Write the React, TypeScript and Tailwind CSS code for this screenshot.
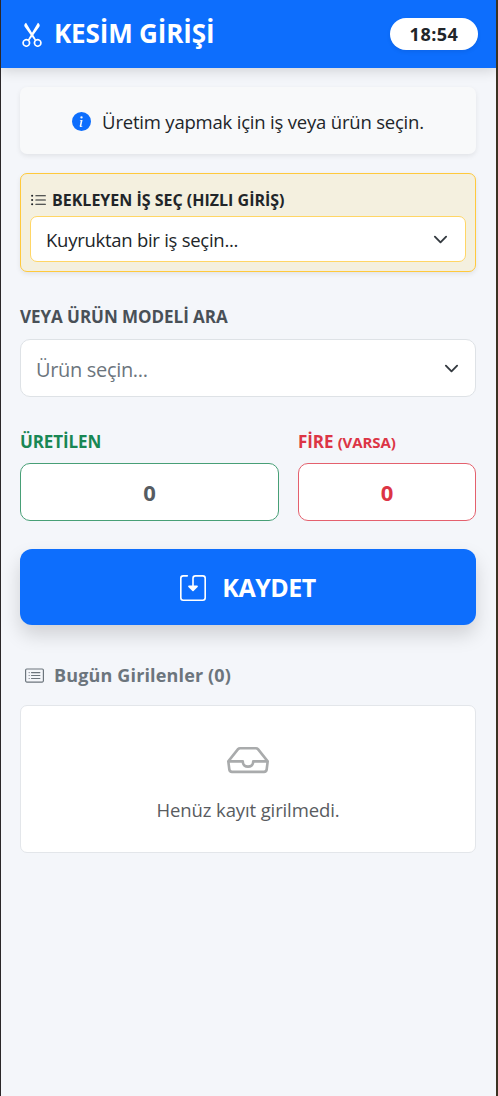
import React from "react";
import {
  BsCardList,
  BsInbox,
  BsInfoCircleFill,
  BsListUl,
  BsSave2,
  BsScissors,
} from "react-icons/bs";

interface QuantityFieldProps {
  label: React.ReactNode;
  value: number;
  labelClass: string;
  boxClass: string;
}

const Chevron = () => (
  <svg
    viewBox="0 0 16 16"
    className="h-[15px] w-[15px] shrink-0 fill-none stroke-[#343a40] stroke-2"
    strokeLinecap="round"
    strokeLinejoin="round"
  >
    <path d="m2 5 6 6 6-6" />
  </svg>
);

const QuantityField = ({ label, value, labelClass, boxClass }: QuantityFieldProps) => (
  <div>
    <div className={`h-6 text-[17px] leading-6 font-bold tracking-[-0.1px] whitespace-nowrap ${labelClass}`}>
      {label}
    </div>
    <div
      className={`mt-[9px] flex h-[58px] items-center justify-center rounded-[10px] border bg-white text-[22px] font-bold ${boxClass}`}
    >
      {value}
    </div>
  </div>
);

const App = () => {
  const entries: string[] = [];

  return (
    <div className="h-[1096px] w-[498px] overflow-hidden border-r-2 border-l border-r-[#3b3222] border-l-[#2b2729] bg-[#f4f6fa] font-['Open_Sans','Noto_Sans',sans-serif] text-[#212529]">
      <header className="flex h-[68px] items-center justify-between bg-[#0d6efd] pr-[18px] pl-[18px] text-white shadow-[0_3px_12px_rgba(0,0,0,0.14)]">
        <h1 className="flex items-center pb-px text-[26px] font-bold whitespace-nowrap">
          <BsScissors className="mr-[9px] h-[26px] w-[26px]" />
          <span className="tracking-[-0.15px]">KESİM GİRİŞİ</span>
        </h1>
        <div className="flex h-8 w-[88px] items-center justify-center rounded-full bg-white text-lg font-bold tracking-[0.5px] text-[#212529] shadow-[0_2px_4px_rgba(0,0,0,0.075)]">
          18:54
        </div>
      </header>

      <main className="mr-[19px] ml-[19px] flex w-[456px] flex-col pt-[19px]">
        <div className="flex h-[67px] items-center justify-center rounded-[7px] bg-[#f8f9fa] pt-0.5 text-[18.5px] whitespace-nowrap shadow-[0_2px_5px_rgba(0,0,0,0.08)]">
          <BsInfoCircleFill className="mr-[11px] h-[19px] w-[19px] text-[#0d6efd]" />
          <span className="tracking-[-0.2px]">Üretim yapmak için iş veya ürün seçin.</span>
        </div>

        <section className="mt-[19px] h-[99px] rounded-[7px] border border-[#ffc93c] bg-[#f4f0df] px-[9px] pt-[14px] shadow-[0_2px_5px_rgba(0,0,0,0.08)]">
          <div className="flex h-6 items-center text-base font-bold whitespace-nowrap">
            <BsListUl className="mr-[5px] h-[17px] w-[17px]" />
            <span>BEKLEYEN İŞ SEÇ (HIZLI GİRİŞ)</span>
          </div>
          <div className="mt-1 flex h-[46px] items-center justify-between rounded-[7px] border border-[#ffd666] bg-white pr-[17px] pl-[15px] text-[18.5px] whitespace-nowrap">
            <span className="pt-0.5 tracking-[-0.27px]">Kuyruktan bir iş seçin...</span>
            <Chevron />
          </div>
        </section>

        <div className="mt-[33px] h-6 text-[17px] leading-6 font-bold text-[#495057]">
          <span className="tracking-[-0.04px]">VEYA ÜRÜN MODELİ ARA</span>
        </div>
        <div className="mt-[10px] flex h-[58px] items-center justify-between rounded-[10px] border border-[#dee2e6] bg-white pr-4 pl-[15px] text-xl text-[#6c757d]">
          <span className="pt-[3px] tracking-[-0.33px]">Ürün seçin...</span>
          <Chevron />
        </div>

        <div className="mt-[33px] grid grid-cols-[259px_178px] gap-[19px]">
          <QuantityField
            label="ÜRETİLEN"
            value={0}
            labelClass="text-[#198754]"
            boxClass="border-[#479f76] text-[#565c62]"
          />
          <QuantityField
            label={
              <>
                FİRE <span className="text-[15px]">(VARSA)</span>
              </>
            }
            value={0}
            labelClass="text-[#dc3545]"
            boxClass="border-[#e4606d] text-[#dc3545]"
          />
        </div>

        <button
          type="button"
          className="mt-7 flex h-[76px] items-center justify-center rounded-xl bg-[#0d6efd] pt-0.5 text-[25px] font-bold text-white shadow-[0_10px_19px_rgba(0,0,0,0.15)]"
        >
          <BsSave2 className="mr-4 h-[26px] w-[26px]" />
          <span className="tracking-[-0.5px]">KAYDET</span>
        </button>

        <h2 className="mt-9 flex h-7 items-center pl-[5px] text-lg font-bold whitespace-nowrap text-[#6c757d]">
          <BsCardList className="mr-[10px] h-[19px] w-[19px]" />
          <span className="tracking-[0.15px]">Bugün Girilenler ({entries.length})</span>
        </h2>

        <div className="mt-4 flex h-[148px] flex-col items-center rounded-[7px] border border-[#e3e6ea] bg-white pt-[33px] text-[#595c5f]">
          <BsInbox className="h-[42px] w-[42px] text-[#a9abac]" />
          <p className="mt-[15px] text-[18.5px] leading-7 tracking-[-0.12px]">Henüz kayıt girilmedi.</p>
        </div>
      </main>
    </div>
  );
};

export default App;
